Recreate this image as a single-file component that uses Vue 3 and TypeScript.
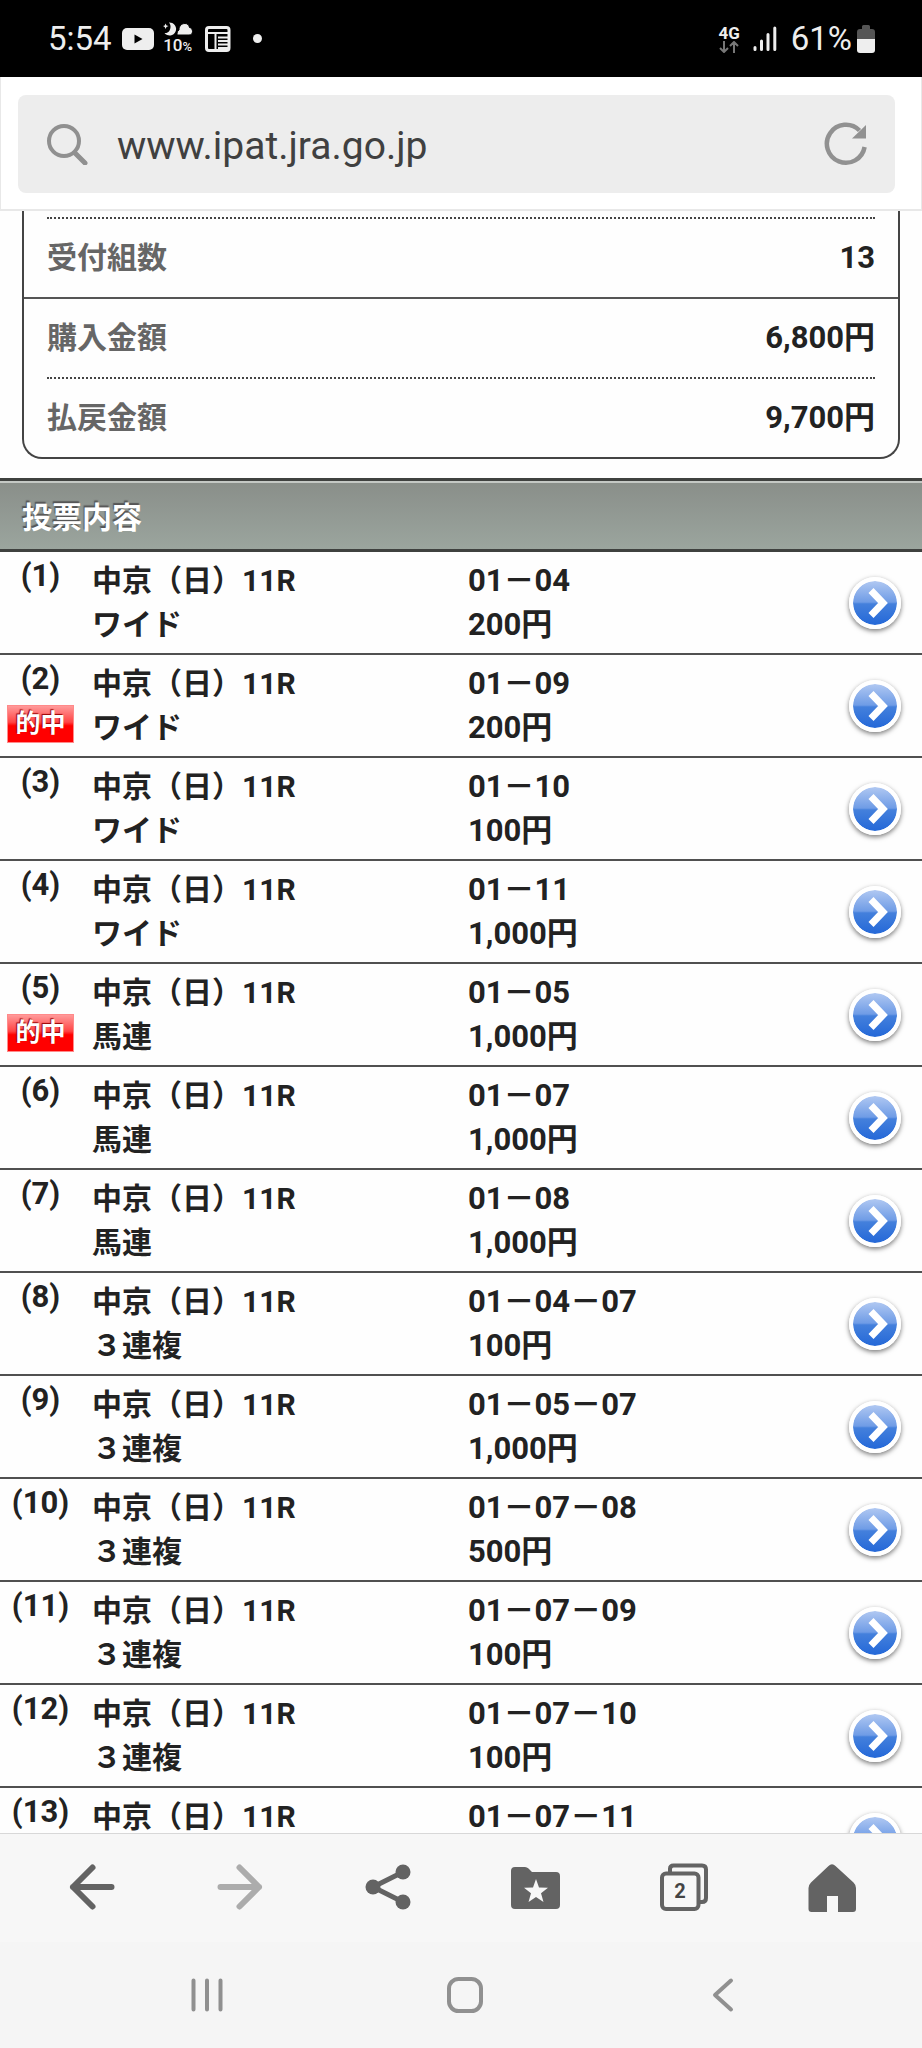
<script setup lang="ts">
import { ref } from 'vue'

interface SummaryRow {
  label: string
  value: string
  line: 'dotted' | 'solid'
}

interface Bet {
  race: string
  type: string
  numbers: string
  amount: string
  hit?: boolean
}

const address = ref('www.ipat.jra.go.jp')

const summary: SummaryRow[] = [
  { label: '受付組数', value: '13', line: 'dotted' },
  { label: '購入金額', value: '6,800円', line: 'solid' },
  { label: '払戻金額', value: '9,700円', line: 'dotted' },
]

const race = '中京（日）11R'

const bets: Bet[] = [
  { race, type: 'ワイド', numbers: '01－04', amount: '200円' },
  { race, type: 'ワイド', numbers: '01－09', amount: '200円', hit: true },
  { race, type: 'ワイド', numbers: '01－10', amount: '100円' },
  { race, type: 'ワイド', numbers: '01－11', amount: '1,000円' },
  { race, type: '馬連', numbers: '01－05', amount: '1,000円', hit: true },
  { race, type: '馬連', numbers: '01－07', amount: '1,000円' },
  { race, type: '馬連', numbers: '01－08', amount: '1,000円' },
  { race, type: '３連複', numbers: '01－04－07', amount: '100円' },
  { race, type: '３連複', numbers: '01－05－07', amount: '1,000円' },
  { race, type: '３連複', numbers: '01－07－08', amount: '500円' },
  { race, type: '３連複', numbers: '01－07－09', amount: '100円' },
  { race, type: '３連複', numbers: '01－07－10', amount: '100円' },
  { race, type: '３連複', numbers: '01－07－11', amount: '1,000円' },
]
</script>

<template>
  <div class="phone">
    <header class="status">
      <span class="status-text">5:54</span>
      <svg class="youtube" width="32" height="24" viewBox="0 0 32 24" aria-hidden="true">
        <rect x="0" y="1" width="32" height="22" rx="5" fill="#eee" />
        <path d="M12.500 7.500v9l8-4.500z" fill="#000" />
      </svg>
      <div class="weather">
        <svg width="30" height="14" viewBox="0 0 30 14" aria-hidden="true">
          <path d="M6 .5a6.500 6.500 0 1 1-4.500 10.500c5 1 8-6.500 4.500-10.500z" fill="#eee" />
          <path d="M2.500 1.500l1 2 2 .5-2 1-1 2-.8-2-1.700-1 1.700-.5z" fill="#eee" />
          <path d="M14 13c0-3 .5-4 2-5 0-4 2.500-6.500 6-6.500 2.500 0 4 1.500 4.500 4 2 .3 3 2 3 4 0 2.500-1.500 3.500-3.500 3.500z" fill="#eee" stroke="#000" />
        </svg>
        <span class="rain">10<small>%</small></span>
      </div>
      <svg class="news" width="26" height="26" viewBox="0 0 26 26" aria-hidden="true">
        <rect x="1.500" y="1.500" width="22.500" height="23" rx="2.500" fill="none" stroke="#eee" stroke-width="3" />
        <path d="M3 7h20M10.500 7v17" stroke="#eee" stroke-width="2" />
        <path d="M13 11.500h11M13 15h11M13 18.500h11M13 22h11" stroke="#eee" stroke-width="2" />
      </svg>
      <span class="dot"></span>
      <div class="network">
        <span>4G</span>
        <svg width="20" height="12" viewBox="0 0 20 12" fill="none" stroke="#777" stroke-width="2" aria-hidden="true">
          <path d="M5 0v11M1 7l4 4 4-4M15 12V1M11 5l4-4 4 4" />
        </svg>
      </div>
      <svg class="signal" width="24" height="26" viewBox="0 0 24 26" stroke="#eee" stroke-width="3" stroke-linecap="round" aria-hidden="true">
        <path d="M2 21.500v2M8.500 15v8.500M15 8.500v15M21.800 2v21.500" />
      </svg>
      <span class="status-text">61%</span>
      <svg class="battery" width="18" height="28" viewBox="0 0 18 28" aria-hidden="true">
        <path d="M5 1.500q0-1.500 1.500-1.500h5q1.500 0 1.500 1.500V4h2q3 0 3 3v7H0V7q0-3 3-3h2z" fill="#555" />
        <path d="M0 14h18v11q0 3-3 3H3q-3 0-3-3z" fill="#eee" />
      </svg>
    </header>

    <div class="browser">
      <div class="address">
        <label for="address" aria-label="アドレス">
          <svg width="42" height="42" viewBox="0 0 42 42" fill="none" stroke="#909090" aria-hidden="true">
            <circle cx="18" cy="18" r="15" stroke-width="4" />
            <path d="M29 30l10 10" stroke-width="5" stroke-linecap="round" />
          </svg>
        </label>
        <input id="address" v-model="address" type="text" />
        <button type="button" class="reload" aria-label="更新">
          <svg width="44" height="44" viewBox="0 0 44 44" aria-hidden="true">
            <path d="M35.500 8.500A19 19 0 1 0 40.600 25" fill="none" stroke="#919191" stroke-width="4.500" />
            <path d="M42 3v13.500H28z" fill="#919191" />
          </svg>
        </button>
      </div>
    </div>

    <main class="page">
      <dl class="summary">
        <div v-for="row in summary" :key="row.label" class="summary-row" :class="row.line">
          <dt>{{ row.label }}</dt>
          <dd>{{ row.value }}</dd>
        </div>
      </dl>

      <h2 class="heading">投票内容</h2>

      <table class="bets">
        <tbody>
          <tr v-for="(bet, i) in bets" :key="i">
            <th scope="row">
              <span class="number">({{ i + 1 }})</span>
              <span v-if="bet.hit" class="hit">的中</span>
            </th>
            <td>{{ bet.race }}<br />{{ bet.type }}</td>
            <td class="stake">{{ bet.numbers }}<br />{{ bet.amount }}</td>
            <td class="action">
              <button type="button" class="detail" :aria-label="`詳細 ${i + 1}`">
                <svg width="44" height="44" viewBox="0 0 44 44" aria-hidden="true">
                  <path d="M18 9.500L30 22 18 34.500" fill="none" stroke="#fff" stroke-width="7" />
                </svg>
              </button>
            </td>
          </tr>
        </tbody>
      </table>
    </main>

    <nav class="toolbar" aria-label="ブラウザ">
      <button type="button" aria-label="戻る">
        <svg width="52" height="52" viewBox="0 0 52 52" fill="none" stroke="#636363" stroke-width="6" stroke-linecap="round" stroke-linejoin="round" aria-hidden="true">
          <path d="M26.500 6.500L7 26l19.500 19.500M7 26h38.500" />
        </svg>
      </button>
      <button type="button" aria-label="進む">
        <svg width="52" height="52" viewBox="0 0 52 52" fill="none" stroke="#acacac" stroke-width="6" stroke-linecap="round" stroke-linejoin="round" aria-hidden="true">
          <path d="M25.500 6.500L45 26 25.500 45.500M45 26H6.500" />
        </svg>
      </button>
      <button type="button" aria-label="共有">
        <svg width="52" height="52" viewBox="0 0 52 52" aria-hidden="true">
          <path d="M41 11L11 26l30 15" fill="none" stroke="#636363" stroke-width="5" />
          <g fill="#636363">
            <circle cx="41" cy="11" r="7.500" />
            <circle cx="11" cy="26" r="7.500" />
            <circle cx="41" cy="41" r="7.500" />
          </g>
        </svg>
      </button>
      <button type="button" aria-label="ブックマーク">
        <svg width="52" height="52" viewBox="0 0 52 52" aria-hidden="true">
          <path d="M1 10q0-4 4-4h10q2 0 3.500 1.500L22 11h24q4 0 4 4v29q0 4-4 4H5q-4 0-4-4z" fill="#636363" />
          <path d="M26 18l3 8.500 9 .2-7 5.500 2.500 8.800-7.500-5-7.500 5 2.500-8.800-7-5.500 9-.2z" fill="#f7f7f7" />
        </svg>
      </button>
      <button type="button" class="tabs" aria-label="タブ">
        <svg width="52" height="52" viewBox="0 0 52 52" fill="none" stroke="#636363" stroke-width="4" aria-hidden="true">
          <rect x="4" y="12.500" width="36.500" height="35.500" rx="4" />
          <path d="M12 12V8q0-3.500 3.500-3.500H44q4 0 4 4V37q0 4-4 4h-3" />
        </svg>
        <span>2</span>
      </button>
      <button type="button" aria-label="ホーム">
        <svg width="52" height="52" viewBox="0 0 52 52" aria-hidden="true">
          <path d="M22.500 5q3.500-3.500 7 0L47.500 21.500q2.500 2.500 2.500 5.500v21q0 3-3 3H32V35H21v16H5.500q-3 0-3-3V27q0-3 2.500-5.500z" fill="#636363" />
        </svg>
      </button>
    </nav>

    <nav class="system" aria-label="システム">
      <button type="button" aria-label="最近使ったアプリ">
        <svg width="40" height="40" viewBox="0 0 40 40" fill="none" stroke="#909090" stroke-width="4" stroke-linecap="round" aria-hidden="true">
          <path d="M6.500 5.500v29M20 5.500v29M33.500 5.500v29" />
        </svg>
      </button>
      <button type="button" aria-label="ホーム画面">
        <svg width="40" height="40" viewBox="0 0 40 40" fill="none" stroke="#909090" stroke-width="4" aria-hidden="true">
          <rect x="4" y="4" width="32" height="32" rx="9.500" />
        </svg>
      </button>
      <button type="button" aria-label="前の画面">
        <svg width="40" height="40" viewBox="0 0 40 40" fill="none" stroke="#909090" stroke-width="4" stroke-linecap="round" stroke-linejoin="round" aria-hidden="true">
          <path d="M28 5.500L12 20l16 14.500" />
        </svg>
      </button>
    </nav>
  </div>
</template>

<style>
body {
  margin: 0;
  background: #fff;
}
</style>

<style scoped>
* {
  box-sizing: border-box;
}

.phone {
  display: flex;
  flex-direction: column;
  height: 100vh;
  overflow: hidden;
  background: #fefefe;
  color: #222;
  font-family: Roboto, 'Noto Sans CJK JP', sans-serif;
}

button {
  display: flex;
  align-items: center;
  justify-content: center;
  padding: 0;
  border: 0;
  background: none;
  font: inherit;
  color: inherit;
}

.status {
  flex: none;
  display: flex;
  align-items: center;
  height: 77px;
  padding: 0 47px 0 48px;
  background: #000;
  color: #eee;
}

.status-text {
  font-size: 33px;
  line-height: 40px;
}

.youtube {
  margin-left: 10px;
}

.weather {
  display: flex;
  flex-direction: column;
  align-items: center;
  margin-left: 9px;
}

.rain {
  font-size: 17px;
  font-weight: 500;
  line-height: 18px;
}

.rain small {
  font-size: 13px;
}

.news {
  margin-left: 12px;
}

.dot {
  width: 9px;
  height: 9px;
  margin: 0 auto 0 22px;
  border-radius: 50%;
  background: #eee;
}

.network {
  display: flex;
  flex-direction: column;
  align-items: center;
  margin-right: 13px;
  font-size: 17px;
  font-weight: 700;
  line-height: 16px;
}

.signal {
  margin-right: 14px;
}

.battery {
  margin-left: 5px;
}

.browser {
  flex: none;
  padding: 18px 26px 16px 17px;
  border: 1px solid #e8e8e8;
  border-width: 0 1px 2px;
  background: #fff;
}

.address {
  display: flex;
  align-items: center;
  height: 98px;
  padding: 0 27px 0 28px;
  border-radius: 8px;
  background: #ededed;
}

.address label,
.reload {
  flex: none;
  display: flex;
}

.address input {
  flex: 1;
  min-width: 0;
  height: 64px;
  margin-left: 29px;
  padding: 4px 0 0;
  border: 0;
  outline: 0;
  background: transparent;
  color: #404040;
  font: 400 39px/60px Roboto, sans-serif;
}

.page {
  flex: 1;
  min-height: 0;
  overflow-y: auto;
  scrollbar-width: none;
  font-size: 30px;
  font-weight: 700;
}

.summary {
  margin: 0 22px 19px;
  padding-top: 6px;
  border: 2px solid #444;
  border-top: 0;
  border-radius: 0 0 20px 20px;
}

.summary-row {
  display: flex;
  align-items: center;
  justify-content: space-between;
  height: 80px;
  margin: 0 23px;
  border-top: 2px dotted #444;
  line-height: 40px;
}

.summary-row.solid {
  margin: 0;
  padding: 0 23px;
  border-top: 2px solid #555;
}

.summary dt {
  color: #666;
}

.summary dd {
  margin: 0;
  font-size: 31px;
}

.heading {
  margin: 0;
  padding: 6px 22px 0;
  border: solid #3f413f;
  border-width: 3px 0;
  box-shadow: inset 0 2px #c4c8c4;
  background: linear-gradient(#898e89, #9ba59e);
  color: #fff;
  font-size: 30px;
  font-weight: 700;
  line-height: 62px;
  text-shadow: -1px -2px 1px #555;
}

.bets,
.bets tbody {
  display: block;
}

.bets tr {
  display: grid;
  grid-template-columns: 92px 376fr 360fr 94px;
  border-bottom: 2px solid #505050;
}

.bets th {
  display: flex;
  flex-direction: column;
  align-items: center;
  padding: 2px 11px 0 0;
}

.number {
  font-size: 31px;
  line-height: 44px;
}

.hit {
  width: 67px;
  margin-top: 4px;
  border: 1px solid #ff8a8a;
  background: linear-gradient(#ff9a9a, #f44 45%, #f00 55%, #f00);
  color: #fff;
  font-size: 25px;
  line-height: 36px;
  text-align: center;
  text-shadow: -1px -1px 1px #900;
}

.bets td {
  padding: 7px 0 6px;
  line-height: 44px;
  white-space: nowrap;
}

.bets .stake {
  font-size: 31px;
}

.bets .action {
  display: flex;
  align-items: center;
  justify-content: center;
  padding: 0;
}

.detail {
  width: 52px;
  height: 52px;
  border: 4px solid #fff;
  border-radius: 50%;
  background: linear-gradient(#b0c8f2, #6f9ce6 48%, #4480dc 52%, #2468d8) padding-box;
  box-shadow: 0 2px 5px #777;
}

.toolbar,
.system {
  flex: none;
  display: grid;
  align-items: center;
  justify-items: center;
}

.toolbar {
  grid-template-columns: repeat(6, 1fr);
  height: 109px;
  padding: 0 16px 3px 18px;
  border-top: 1px solid #d8d8d8;
  background: #f7f7f7;
}

.tabs {
  display: grid;
}

.tabs svg,
.tabs span {
  grid-area: 1 / 1;
}

.tabs span {
  padding: 9px 8px 0 0;
  color: #444;
  font-size: 20px;
  font-weight: 700;
  line-height: 24px;
}

.system {
  grid-template-columns: repeat(3, 1fr);
  height: 106px;
  padding: 0 70px 0 78px;
  background: #f5f5f5;
}
</style>
